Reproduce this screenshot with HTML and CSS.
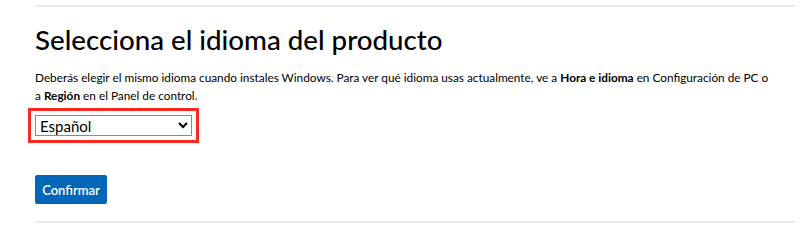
FILE: index.html
```html
<!DOCTYPE html>
<html lang="es">
<head>
    <meta charset="UTF-8">
    <meta name="viewport" content="width=device-width, initial-scale=1.0">
    <title>Seleccionar idioma</title>
    <link rel="stylesheet" href="styles.css">
</head>
<body>
    <div class="page">
        <section class="language-step">
            <h2>Selecciona el idioma del producto</h2>
            <p>Deberás elegir el mismo idioma cuando instales Windows. Para ver qué idioma usas actualmente, ve a <strong>Hora e idioma</strong> en Configuración de PC o a <strong>Región</strong> en el Panel de control.</p>
            <select id="product-languages" class="language-select">
                <option>Español</option>
                <option>English (United States)</option>
                <option>Français</option>
            </select>
            <div class="actions">
                <button id="submit-sku" class="btn-primary">Confirmar</button>
            </div>
        </section>
    </div>
</body>
</html>
```

FILE: styles.css
```css
body {
    font-family: Lato, "Noto Sans", sans-serif;
    margin: 0;
    padding: 0;
    background-color: #fff;
    color: #000;
}

.page {
    width: 760px;
    margin-left: 35px;
}

.language-step {
    border-top: 2px solid #ebebeb;
    border-bottom: 2px solid #ebebeb;
    margin-top: 5px;
    padding-top: 16px;
    padding-bottom: 17px;
}

.language-step h2 {
    font-size: 27.7px;
    font-weight: 500;
    margin: 0 0 12px;
    line-height: 34px;
}

.language-step p {
    max-width: 736px;
    font-size: 11.8px;
    line-height: 17.5px;
    margin: 0 0 11px;
}

.language-select {
    display: block;
    width: 157px;
    height: 21px;
    font-family: inherit;
    font-size: 15px;
    border: 1px solid #8a8a8a;
    border-radius: 0;
    background: #fff;
    outline: 3px solid #ff2a1f;
    outline-offset: 4px;
}

.actions {
    margin-top: 39px;
}

.btn-primary {
    width: 72px;
    height: 29px;
    padding: 0;
    border: none;
    border-radius: 2px;
    background-color: #0067b8;
    color: #fff;
    font-family: inherit;
    font-size: 13px;
    font-weight: 600;
    cursor: pointer;
}

.btn-primary:hover {
    background-color: #005da6;
}
```
